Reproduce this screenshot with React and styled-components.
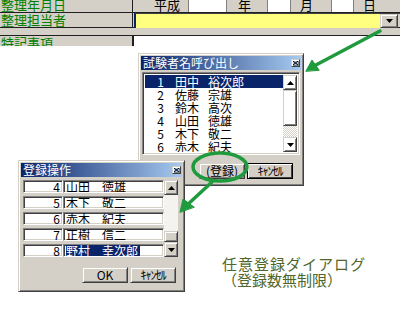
import React from "react";
import styled, { createGlobalStyle, css } from "styled-components";

const GlobalStyle = createGlobalStyle`
    html, body {
        margin: 0;
        padding: 0;
        background: #ffffff;
    }
    body {
        font-family: "Noto Sans CJK JP", "Liberation Sans", sans-serif;
    }
`;

const gray = "#d4d0c8";
const navy = "#0a246a";

const raised = css`
    border: 1px solid;
    border-color: ${gray} #404040 #404040 ${gray};
    box-shadow: inset 1px 1px #ffffff, inset -1px -1px #808080;
`;

const sunken = css`
    border: 1px solid;
    border-color: #808080 #ffffff #ffffff #808080;
    box-shadow: inset 1px 1px #404040, inset -1px -1px ${gray};
`;

const Page = styled.div`
    position: relative;
    width: 400px;
    height: 311px;
    overflow: hidden;
    background: #ffffff;
    font-size: 12px;
    line-height: 12px;
`;

/* ---------- top form ---------- */

const Form = styled.div`
    height: 46px;
    background: ${gray};
    display: flex;
    flex-direction: column;
    overflow: hidden;
`;

const FormRow = styled.div`
    display: grid;
    grid-template-columns: 133px 1fr;
    height: ${(p) => p.h}px;
    border-bottom: ${(p) => (p.line ? "1px solid #202020" : "none")};
    box-sizing: border-box;
`;

const Label = styled.div`
    color: #008000;
    font-size: 13px;
    line-height: 13px;
    padding-left: 1px;
    border-right: 1px solid #202020;
    overflow: hidden;
    margin-top: ${(p) => p.shift || 0}px;
`;

const DateCells = styled.div`
    display: grid;
    grid-template-columns: 55px 39px 40px 24px 40px 23px 1fr;
    margin-top: -2px;
`;

const DateLabel = styled.div`
    display: flex;
    justify-content: ${(p) => p.align || "flex-start"};
    padding: 0 ${(p) => (p.align ? 8 : 0)}px 0 ${(p) => p.pl || 0}px;
    font-size: 13px;
    line-height: 14px;
    color: #000;
`;

const DateInput = styled.div`
    background: #fff;
    border-left: 1px solid #808080;
    border-right: 1px solid #808080;
`;

const Combo = styled.div`
    display: flex;
    height: 14px;
    border-top: 1px solid #404040;
    border-left: 2px solid ${navy};
    margin-left: 1px;
`;

const ComboField = styled.div`
    flex: 1;
    background: #ffff80;
`;

const ComboButton = styled.div`
    width: 18px;
    box-sizing: border-box;
    ${raised};
    display: flex;
    align-items: center;
    justify-content: center;
    margin-right: 2px;
`;

const Gap = styled.div`
    height: 9px;
    border-bottom: 1px solid #202020;
`;

const NoteBox = styled.div`
    background: #fff;
    border-left: 1px solid #202020;
`;

/* ---------- dialogs ---------- */

const Window = styled.div`
    position: absolute;
    left: ${(p) => p.x}px;
    top: ${(p) => p.y}px;
    width: ${(p) => p.w}px;
    height: ${(p) => p.h}px;
    box-sizing: border-box;
    background: ${gray};
    ${raised};
    padding: 2px;
    display: flex;
    flex-direction: column;
`;

const TitleBar = styled.div`
    height: 14px;
    display: flex;
    align-items: center;
    justify-content: space-between;
    padding: 0 1px 0 2px;
    background: linear-gradient(to right, ${navy}, #a6caf0);
    color: #fff;
    font-size: 12px;
    line-height: 14px;
`;

const CloseBox = styled.div`
    width: 9px;
    height: 8px;
    box-sizing: border-box;
    ${raised};
    display: flex;
    align-items: center;
    justify-content: center;
`;

const ListBox = styled.div`
    ${sunken};
    background: #fff;
    margin: 2px 1px 0;
    padding: 2px;
    display: flex;
    height: ${(p) => p.h}px;
    box-sizing: border-box;
`;

const ListItems = styled.div`
    flex: 1;
    overflow: hidden;
`;

const ListRow = styled.div`
    display: flex;
    height: 13px;
    line-height: 13px;
    font-size: 12px;
    background: ${(p) => (p.sel ? navy : "transparent")};
    color: ${(p) => (p.sel ? "#fff" : "#000")};
`;

const Num = styled.span`
    width: ${(p) => p.w}px;
    text-align: right;
`;

const Name = styled.span`
    margin-left: ${(p) => p.ml}px;
    white-space: pre;
`;

const ScrollBar = styled.div`
    width: 14px;
    display: flex;
    flex-direction: column;
`;

const ScrollBtn = styled.div`
    height: ${(p) => p.h || 15}px;
    box-sizing: border-box;
    ${raised};
    display: flex;
    align-items: center;
    justify-content: center;
`;

const Track = styled.div`
    flex: 1;
    background: ${(p) =>
        p.light
            ? "#f4f3ef"
            : "repeating-conic-gradient(#ffffff 0 25%, " + gray + " 0 50%) 0 0 / 2px 2px"};
`;

const ButtonRow = styled.div`
    display: flex;
    justify-content: flex-end;
    gap: 2px;
    padding-right: ${(p) => p.pr}px;
    margin-top: ${(p) => p.mt}px;
`;

const Button = styled.div`
    width: 46px;
    height: 16px;
    box-sizing: border-box;
    ${raised};
    ${(p) =>
        p.def &&
        css`
            border-color: #000;
            box-shadow: inset 1px 1px #ffffff, inset -1px -1px #404040;
        `};
    display: flex;
    align-items: center;
    justify-content: center;
    font-size: 12px;
    line-height: 14px;
    color: #000;
    letter-spacing: ${(p) => p.ls || 0}px;
`;

const Grid = styled.div`
    display: flex;
    margin: 3px 4px 0 2px;
`;

const Cells = styled.div`
    flex: 1;
    display: flex;
    flex-direction: column;
    gap: 3px;
`;

const CellRow = styled.div`
    display: grid;
    grid-template-columns: 40px 1fr;
    height: 13px;
`;

const Cell = styled.div`
    ${sunken};
    background: #fff;
    font-size: 12px;
    line-height: 12px;
    padding: 0 2px;
    text-align: ${(p) => p.align || "left"};
    overflow: hidden;
    white-space: pre;
`;

const Picked = styled.span`
    background: ${navy};
    color: #fff;
    padding-right: 2px;
`;

const Caption = styled.div`
    position: absolute;
    left: 222px;
    top: 256px;
    color: #50662a;
    font-size: 15px;
    line-height: 16px;
`;

const CaptionLine = styled.div`
    letter-spacing: ${(p) => p.ls || 0}px;
`;

const Overlay = styled.svg`
    position: absolute;
    left: 0;
    top: 0;
    pointer-events: none;
`;

const Arrow = ({ dir }) => (
    <svg width="7" height="4" viewBox="0 0 7 4">
        <polygon
            points={dir === "up" ? "3.5,0 7,4 0,4" : "0,0 7,0 3.5,4"}
            fill="#000"
        />
    </svg>
);

const Cross = () => (
    <svg width="5" height="4" viewBox="0 0 5 4">
        <path d="M0 0 L5 4 M5 0 L0 4" stroke="#000" strokeWidth="1" />
    </svg>
);

const people = [
    ["1", "田中", "裕次郎"],
    ["2", "佐藤", "宗雄"],
    ["3", "鈴木", "高次"],
    ["4", "山田", "徳雄"],
    ["5", "木下", "敬二"],
    ["6", "赤木", "紀夫"],
];

const entries = [
    ["4", "山田　徳雄"],
    ["5", "木下　敬二"],
    ["6", "赤木　紀夫"],
    ["7", "正樹　信二"],
    ["8", "野村　幸次郎"],
];

const App = () => {
    return (
        <Page>
            <GlobalStyle />
            <Form>
                <FormRow h={14} line>
                    <Label shift={-2}>整理年月日</Label>
                    <DateCells>
                        <DateLabel align="flex-end">平成</DateLabel>
                        <DateInput />
                        <DateLabel pl={11}>年</DateLabel>
                        <DateInput />
                        <DateLabel pl={9}>月</DateLabel>
                        <DateInput />
                        <DateLabel pl={9}>日</DateLabel>
                    </DateCells>
                </FormRow>
                <FormRow h={15} line>
                    <Label>整理担当者</Label>
                    <Combo>
                        <ComboField />
                        <ComboButton>
                            <Arrow dir="down" />
                        </ComboButton>
                    </Combo>
                </FormRow>
                <Gap />
                <FormRow h={10}>
                    <Label>特記事項</Label>
                    <NoteBox />
                </FormRow>
            </Form>

            <Window x={138} y={53} w={166} h={133}>
                <TitleBar>
                    <span>試験者名呼び出し</span>
                    <CloseBox>
                        <Cross />
                    </CloseBox>
                </TitleBar>
                <ListBox h={83}>
                    <ListItems>
                        {people.map(([n, fam, given]) => (
                            <ListRow key={n} sel={n === "1"}>
                                <Num w={19}>{n}</Num>
                                <Name ml={11}>{fam}</Name>
                                <Name ml={9}>{given}</Name>
                            </ListRow>
                        ))}
                    </ListItems>
                    <ScrollBar>
                        <ScrollBtn>
                            <Arrow dir="up" />
                        </ScrollBtn>
                        <ScrollBtn h={36} />
                        <Track />
                        <ScrollBtn>
                            <Arrow dir="down" />
                        </ScrollBtn>
                    </ScrollBar>
                </ListBox>
                <ButtonRow pr={8} mt={8}>
                    <Button>(登録)</Button>
                    <Button def ls={-1}>
                        ｷｬﾝｾﾙ
                    </Button>
                </ButtonRow>
            </Window>

            <Window x={18} y={160} w={167} h={132}>
                <TitleBar>
                    <span>登録操作</span>
                    <CloseBox>
                        <Cross />
                    </CloseBox>
                </TitleBar>
                <Grid>
                    <Cells>
                        {entries.map(([n, name]) => (
                            <CellRow key={n}>
                                <Cell align="right">{n}</Cell>
                                <Cell>
                                    {n === "8" ? <Picked>{name}</Picked> : name}
                                </Cell>
                            </CellRow>
                        ))}
                    </Cells>
                    <ScrollBar>
                        <ScrollBtn>
                            <Arrow dir="up" />
                        </ScrollBtn>
                        <Track light />
                        <ScrollBtn h={11} />
                        <ScrollBtn>
                            <Arrow dir="down" />
                        </ScrollBtn>
                    </ScrollBar>
                </Grid>
                <ButtonRow pr={6} mt={10}>
                    <Button>OK</Button>
                    <Button ls={-1}>ｷｬﾝｾﾙ</Button>
                </ButtonRow>
            </Window>

            <Caption>
                <CaptionLine ls={1}>任意登録ダイアログ</CaptionLine>
                <CaptionLine>（登録数無制限）</CaptionLine>
            </Caption>

            <Overlay width="400" height="311" viewBox="0 0 400 311">
                <g stroke="#1f9a3c" fill="#1f9a3c" strokeLinecap="round">
                    <line x1="380" y1="31" x2="314" y2="66" strokeWidth="3.5" />
                    <polygon points="306,71 312,60 319,70" />
                    <ellipse
                        cx="220"
                        cy="167"
                        rx="27"
                        ry="14"
                        fill="none"
                        strokeWidth="3.5"
                    />
                    <line x1="212" y1="182" x2="186" y2="206" strokeWidth="3.5" />
                    <polygon points="180,212 183,199 194,207" />
                </g>
            </Overlay>
        </Page>
    );
};

export default App;
